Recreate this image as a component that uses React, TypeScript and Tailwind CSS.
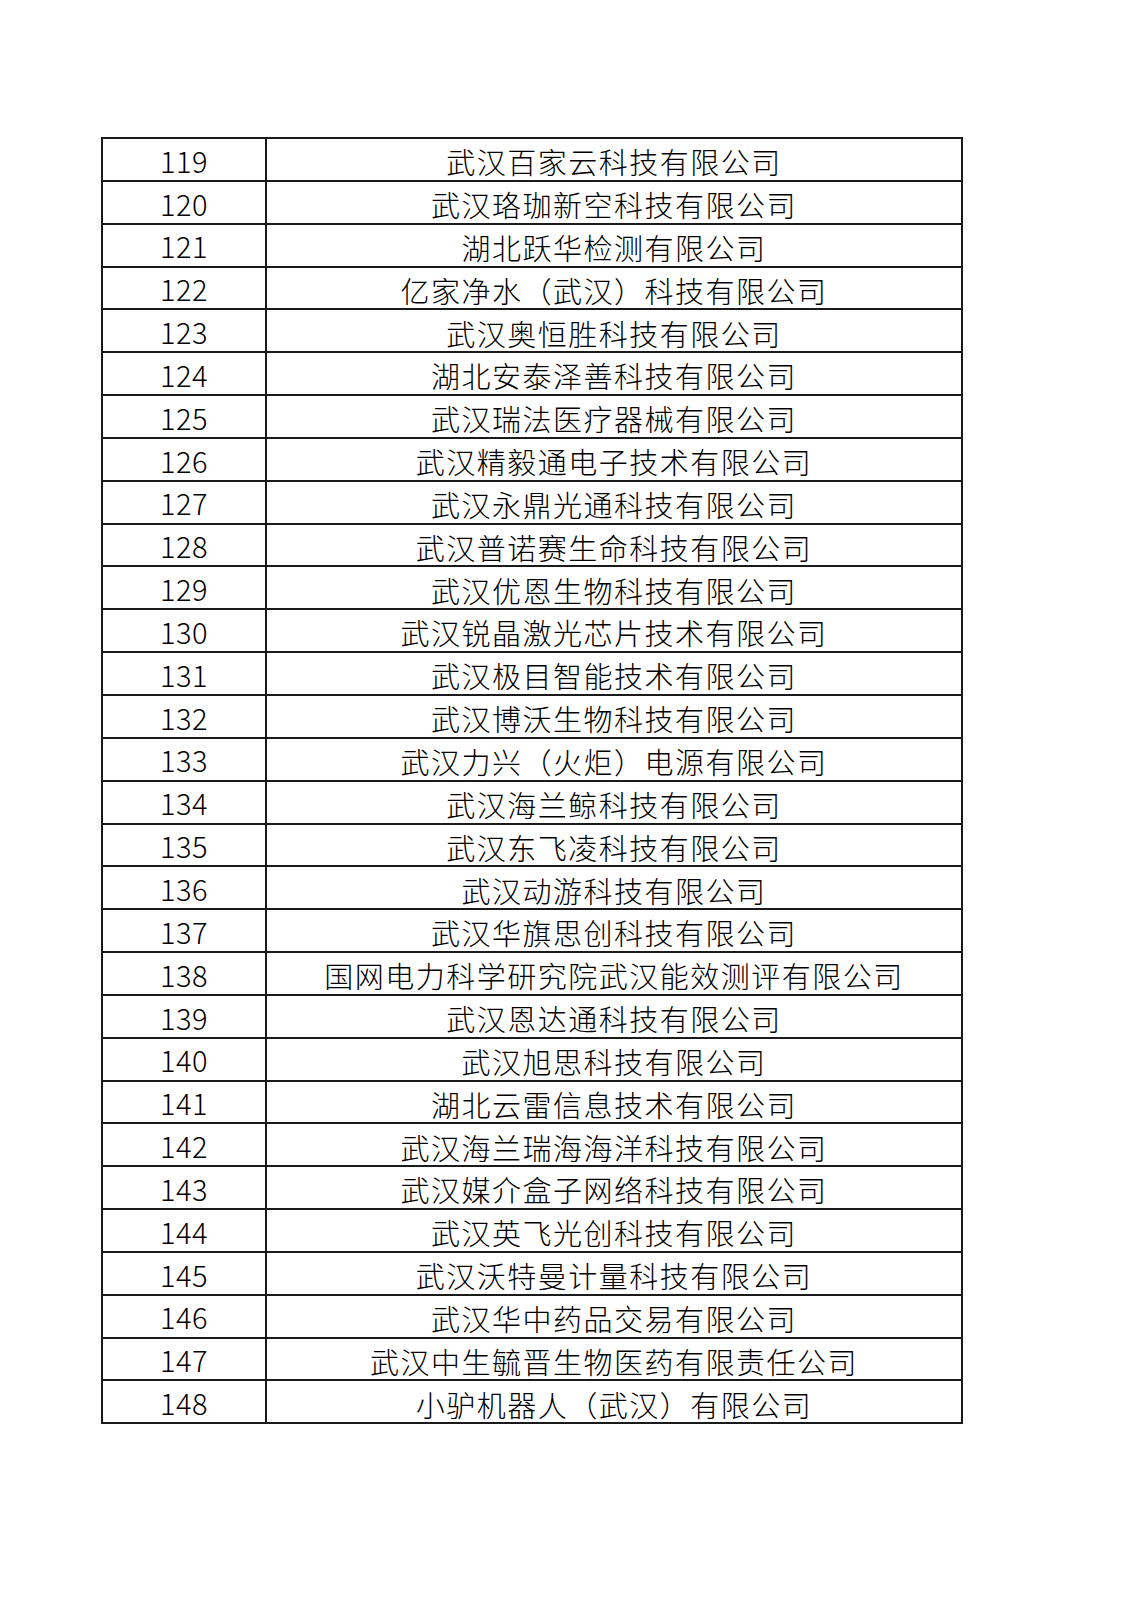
const rows: [number, string][] = [
  [119, "武汉百家云科技有限公司"],
  [120, "武汉珞珈新空科技有限公司"],
  [121, "湖北跃华检测有限公司"],
  [122, "亿家净水（武汉）科技有限公司"],
  [123, "武汉奥恒胜科技有限公司"],
  [124, "湖北安泰泽善科技有限公司"],
  [125, "武汉瑞法医疗器械有限公司"],
  [126, "武汉精毅通电子技术有限公司"],
  [127, "武汉永鼎光通科技有限公司"],
  [128, "武汉普诺赛生命科技有限公司"],
  [129, "武汉优恩生物科技有限公司"],
  [130, "武汉锐晶激光芯片技术有限公司"],
  [131, "武汉极目智能技术有限公司"],
  [132, "武汉博沃生物科技有限公司"],
  [133, "武汉力兴（火炬）电源有限公司"],
  [134, "武汉海兰鲸科技有限公司"],
  [135, "武汉东飞凌科技有限公司"],
  [136, "武汉动游科技有限公司"],
  [137, "武汉华旗思创科技有限公司"],
  [138, "国网电力科学研究院武汉能效测评有限公司"],
  [139, "武汉恩达通科技有限公司"],
  [140, "武汉旭思科技有限公司"],
  [141, "湖北云雷信息技术有限公司"],
  [142, "武汉海兰瑞海海洋科技有限公司"],
  [143, "武汉媒介盒子网络科技有限公司"],
  [144, "武汉英飞光创科技有限公司"],
  [145, "武汉沃特曼计量科技有限公司"],
  [146, "武汉华中药品交易有限公司"],
  [147, "武汉中生毓晋生物医药有限责任公司"],
  [148, "小驴机器人（武汉）有限公司"],
];

export default function App() {
  return (
    <div className="min-h-screen bg-white pt-[137px] pl-[101px] pb-[100px]">
      <div className="w-[862px] border-t-2 border-l-2 border-r-2 border-[#1a1a1a]">
        {rows.map(([n, name]) => (
          <div key={n} className="flex h-[42.85px] border-b-2 border-[#1a1a1a]">
            <div
              className="flex w-[164px] items-center justify-center border-r-2 border-[#1a1a1a] pt-[2px] text-[29px] font-light tracking-[0.5px] text-black"
              style={{ fontFamily: '"Noto Sans CJK SC", sans-serif' }}
            >
              {n}
            </div>
            <div
              className="flex flex-1 items-center justify-center pt-[5px] text-[29px] font-light tracking-[1.5px] text-black"
              style={{ fontFamily: '"Noto Sans CJK SC", sans-serif' }}
            >
              {name}
            </div>
          </div>
        ))}
      </div>
    </div>
  );
}
